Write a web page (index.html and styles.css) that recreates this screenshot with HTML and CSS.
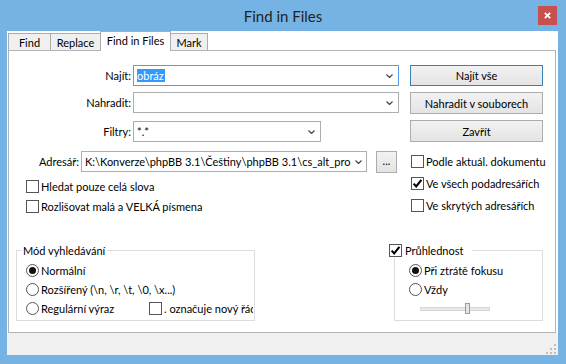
FILE: index.html
```html
<!DOCTYPE html>
<html>
<head>
<meta charset="utf-8">
<link rel="stylesheet" href="styles.css">
</head>
<body>
<div class="window">
  <div class="titlebar">
    <span class="title">Find in Files</span>
    <span class="close"><svg width="7" height="7" viewBox="0 0 7 7"><path d="M0.8 0.8 L6.2 6.2 M6.2 0.8 L0.8 6.2" stroke="#fff" stroke-width="1.7" fill="none"/></svg></span>
  </div>
  <div class="client">
    <div class="tabs">
      <div class="tab t-find">Find</div>
      <div class="tab t-replace">Replace</div>
      <div class="tab t-files active">Find in Files</div>
      <div class="tab t-mark">Mark</div>
    </div>
    <div class="panel">
      <div class="main">
        <div class="fields">
          <div class="field f1">
            <span class="lbl">Najít:</span>
            <div class="combo focus w-long"><span class="val"><span class="sel">obráz</span></span><svg class="chev" width="7" height="4" viewBox="0 0 7 4"><path d="M0.5 0.5 L3.5 3.5 L6.5 0.5" fill="none" stroke="#444" stroke-width="1.2"/></svg></div>
          </div>
          <div class="field f2">
            <span class="lbl">Nahradit:</span>
            <div class="combo w-long"><span class="val"></span><svg class="chev" width="7" height="4" viewBox="0 0 7 4"><path d="M0.5 0.5 L3.5 3.5 L6.5 0.5" fill="none" stroke="#444" stroke-width="1.2"/></svg></div>
          </div>
          <div class="field f3">
            <span class="lbl">Filtry:</span>
            <div class="combo w-filter"><span class="val">*.*</span><svg class="chev" width="7" height="4" viewBox="0 0 7 4"><path d="M0.5 0.5 L3.5 3.5 L6.5 0.5" fill="none" stroke="#444" stroke-width="1.2"/></svg></div>
          </div>
          <div class="field f4">
            <span class="lbl lbl-dir">Adresář:</span>
            <div class="combo w-dir"><span class="val">K:\Konverze\phpBB 3.1\Češtiny\phpBB 3.1\cs_alt_pro</span><svg class="chev" width="7" height="4" viewBox="0 0 7 4"><path d="M0.5 0.5 L3.5 3.5 L6.5 0.5" fill="none" stroke="#444" stroke-width="1.2"/></svg></div>
            <div class="btn dots">...</div>
          </div>
          <div class="check left-check first"><span class="cb"></span><span>Hledat pouze celá slova</span></div>
          <div class="check left-check"><span class="cb"></span><span>Rozlišovat malá a VELKÁ písmena</span></div>
        </div>
        <div class="side">
          <div class="btn default b1">Najít vše</div>
          <div class="btn b2">Nahradit v souborech</div>
          <div class="btn b3">Zavřít</div>
          <div class="check side-check first"><span class="cb"></span><span>Podle aktuál. dokumentu</span></div>
          <div class="check side-check"><span class="cb"><svg width="11" height="11" viewBox="0 0 11 11"><path d="M1.6 5.6 L4.2 8.4 L9.4 1.8" fill="none" stroke="#000" stroke-width="2.1"/></svg></span><span>Ve všech podadresářích</span></div>
          <div class="check side-check"><span class="cb"></span><span>Ve skrytých adresářích</span></div>
        </div>
      </div>
      <div class="groups">
        <fieldset class="group g-mode">
          <legend>Mód vyhledávání</legend>
          <div class="opts mode-opts">
            <div class="opt"><span class="radio on"></span><span>Normální</span></div>
            <div class="opt"><span class="radio"></span><span>Rozšířený (\n, \r, \t, \0, \x...)</span></div>
            <div class="opt"><span class="rx"><span class="radio"></span><span>Regulární výraz</span></span><span class="nl"><span class="cb"></span><span>. označuje nový řádek</span></span></div>
          </div>
        </fieldset>
        <fieldset class="group g-trans">
          <legend><span class="leg-check"><span class="cb"><svg width="11" height="11" viewBox="0 0 11 11"><path d="M1.6 5.6 L4.2 8.4 L9.4 1.8" fill="none" stroke="#000" stroke-width="2.1"/></svg></span><span>Průhlednost</span></span></legend>
          <div class="opts trans-opts">
            <div class="opt"><span class="radio on"></span><span>Při ztrátě fokusu</span></div>
            <div class="opt"><span class="radio"></span><span>Vždy</span></div>
            <div class="slider"><div class="track"><div class="thumb"></div></div></div>
          </div>
        </fieldset>
      </div>
    </div>
    <div class="statusbar">
      <svg class="grip" width="10" height="10" viewBox="0 0 10 10"><g fill="#bdbdbd"><rect x="8" y="0" width="2" height="2"/><rect x="4" y="4" width="2" height="2"/><rect x="8" y="4" width="2" height="2"/><rect x="0" y="8" width="2" height="2"/><rect x="4" y="8" width="2" height="2"/><rect x="8" y="8" width="2" height="2"/></g></svg>
    </div>
  </div>
</div>
</body>
</html>
```
FILE: styles.css
```css
* { box-sizing: border-box; }
html, body { margin: 0; padding: 0; }
body {
  width: 566px;
  height: 364px;
  overflow: hidden;
  font-family: Lato, "Liberation Sans", sans-serif;
  font-size: 11px;
  line-height: 15px;
  color: #000;
  background: #74b3e3;
}
.window {
  width: 566px;
  height: 364px;
  background: #74b3e3;
  display: flex;
  flex-direction: column;
}
.titlebar {
  height: 31px;
  flex: none;
  display: grid;
  grid-template-columns: 1fr auto 1fr;
  align-items: center;
}
.title {
  grid-column: 2;
  font-size: 15px;
  line-height: 20px;
  color: #1f1f1f;
}
.close {
  grid-column: 3;
  justify-self: end;
  align-self: start;
  margin-top: 6px;
  margin-right: 9px;
  width: 19px;
  height: 19px;
  background: #c75050;
  display: flex;
  align-items: center;
  justify-content: center;
}
.client {
  margin-left: 7px;
  width: 551px;
  height: 324px;
  background: #fff;
  display: flex;
  flex-direction: column;
}
.tabs {
  height: 19px;
  flex: none;
  display: flex;
  align-items: flex-end;
  padding-left: 1px;
}
.tab {
  height: 17px;
  border: 1px solid #acacac;
  border-bottom: none;
  background: #f0f0f0;
  margin-left: -1px;
  padding-top: 1px;
  text-align: center;
}
.tab.t-find { margin-left: 0; width: 43px; }
.tab.t-replace { width: 51px; }
.tab.t-files { width: 71px; }
.tab.t-mark { width: 38px; }
.tab.active {
  height: 20px;
  margin-bottom: -1px;
  background: #fff;
  position: relative;
  z-index: 1;
}
.panel {
  flex: none;
  height: 283px;
  width: 548px;
  margin-left: 1px;
  border: 1px solid #b4b4b4;
  padding-top: 14px;
}
.main { display: flex; }
.fields { width: 401px; }
.side { width: 133px; display: flex; flex-direction: column; }
.field { display: flex; align-items: center; height: 21px; }
.f2 { margin-top: 6px; }
.f3 { margin-top: 8px; }
.f4 { margin-top: 9px; }
.lbl { width: 122px; margin-right: 2px; text-align: right; white-space: nowrap; }
.lbl.lbl-dir { width: 70px; }
.combo {
  height: 21px;
  border: 1px solid #abadb3;
  background: #fff;
  display: flex;
  align-items: center;
  padding: 0 5px 0 3px;
}
.combo.focus { border-color: #569de5; }
.w-long { width: 266px; }
.w-filter { width: 188px; }
.w-dir { width: 286px; padding-right: 4px; }
.val { flex: 1; white-space: nowrap; overflow: hidden; }
.sel { display: inline-block; background: #3399ff; color: #fff; line-height: 13px; padding-right: 1px; }
.chev { flex: none; margin-left: 3px; }
.btn {
  height: 22px;
  border: 1px solid #acacac;
  background: linear-gradient(#f2f2f2, #e4e4e4);
  display: flex;
  align-items: center;
  justify-content: center;
  white-space: nowrap;
}
.btn.default { border-color: #3c7fb1; height: 21px; }
.b2, .b3 { margin-top: 6px; }
.dots { width: 21px; margin-left: 9px; padding-bottom: 3px; }
.check { display: flex; align-items: center; gap: 2px; white-space: nowrap; }
.left-check { height: 20px; padding-left: 17px; }
.left-check.first { margin-top: 4px; }
.side-check { height: 22px; padding-left: 1px; }
.side-check.first { margin-top: 8px; }
.cb {
  width: 13px;
  height: 13px;
  flex: none;
  border: 1px solid #555;
  background: #fff;
  display: flex;
  align-items: center;
  justify-content: center;
}
.radio {
  width: 13px;
  height: 13px;
  flex: none;
  border: 1px solid #555;
  border-radius: 50%;
  background: #fff;
  display: flex;
  align-items: center;
  justify-content: center;
}
.radio.on::after {
  content: "";
  width: 7px;
  height: 7px;
  border-radius: 50%;
  background: #111;
}
.groups {
  display: flex;
  margin-top: 27px;
  padding-left: 7px;
  gap: 139px;
}
.group {
  margin: 0;
  padding: 3px 0 2px;
  border: 1px solid #dcdcdc;
  min-width: 0;
}
.g-mode { width: 239px; }
.g-trans { width: 149px; }
.group legend { line-height: 15px; }
.g-mode legend { margin-left: 4px; padding: 0 2px; }
.g-trans legend { margin-left: -6px; padding: 0 9px 0 0; }
.leg-check { display: flex; align-items: center; gap: 3px; height: 15px; }
.opt { display: flex; align-items: center; gap: 2px; height: 19px; white-space: nowrap; }
.mode-opts { padding-left: 9px; }
.trans-opts { padding-left: 14px; }
.rx { display: flex; align-items: center; gap: 2px; width: 121px; }
.nl { display: flex; align-items: center; gap: 2px; width: 104px; overflow: hidden; }
.slider { height: 19px; display: flex; align-items: center; padding-left: 11px; }
.track {
  width: 70px;
  height: 4px;
  background: #e7eaea;
  border: 1px solid #d6d6d6;
  position: relative;
}
.thumb {
  position: absolute;
  left: 44px;
  top: -5px;
  width: 5px;
  height: 11px;
  background: #e6e6e6;
  border: 1px solid #9a9a9a;
}
.statusbar {
  flex: 1;
  background: #f0f0f0;
  display: flex;
  justify-content: flex-end;
  align-items: flex-end;
  padding: 0 2px 1px 0;
}
```
